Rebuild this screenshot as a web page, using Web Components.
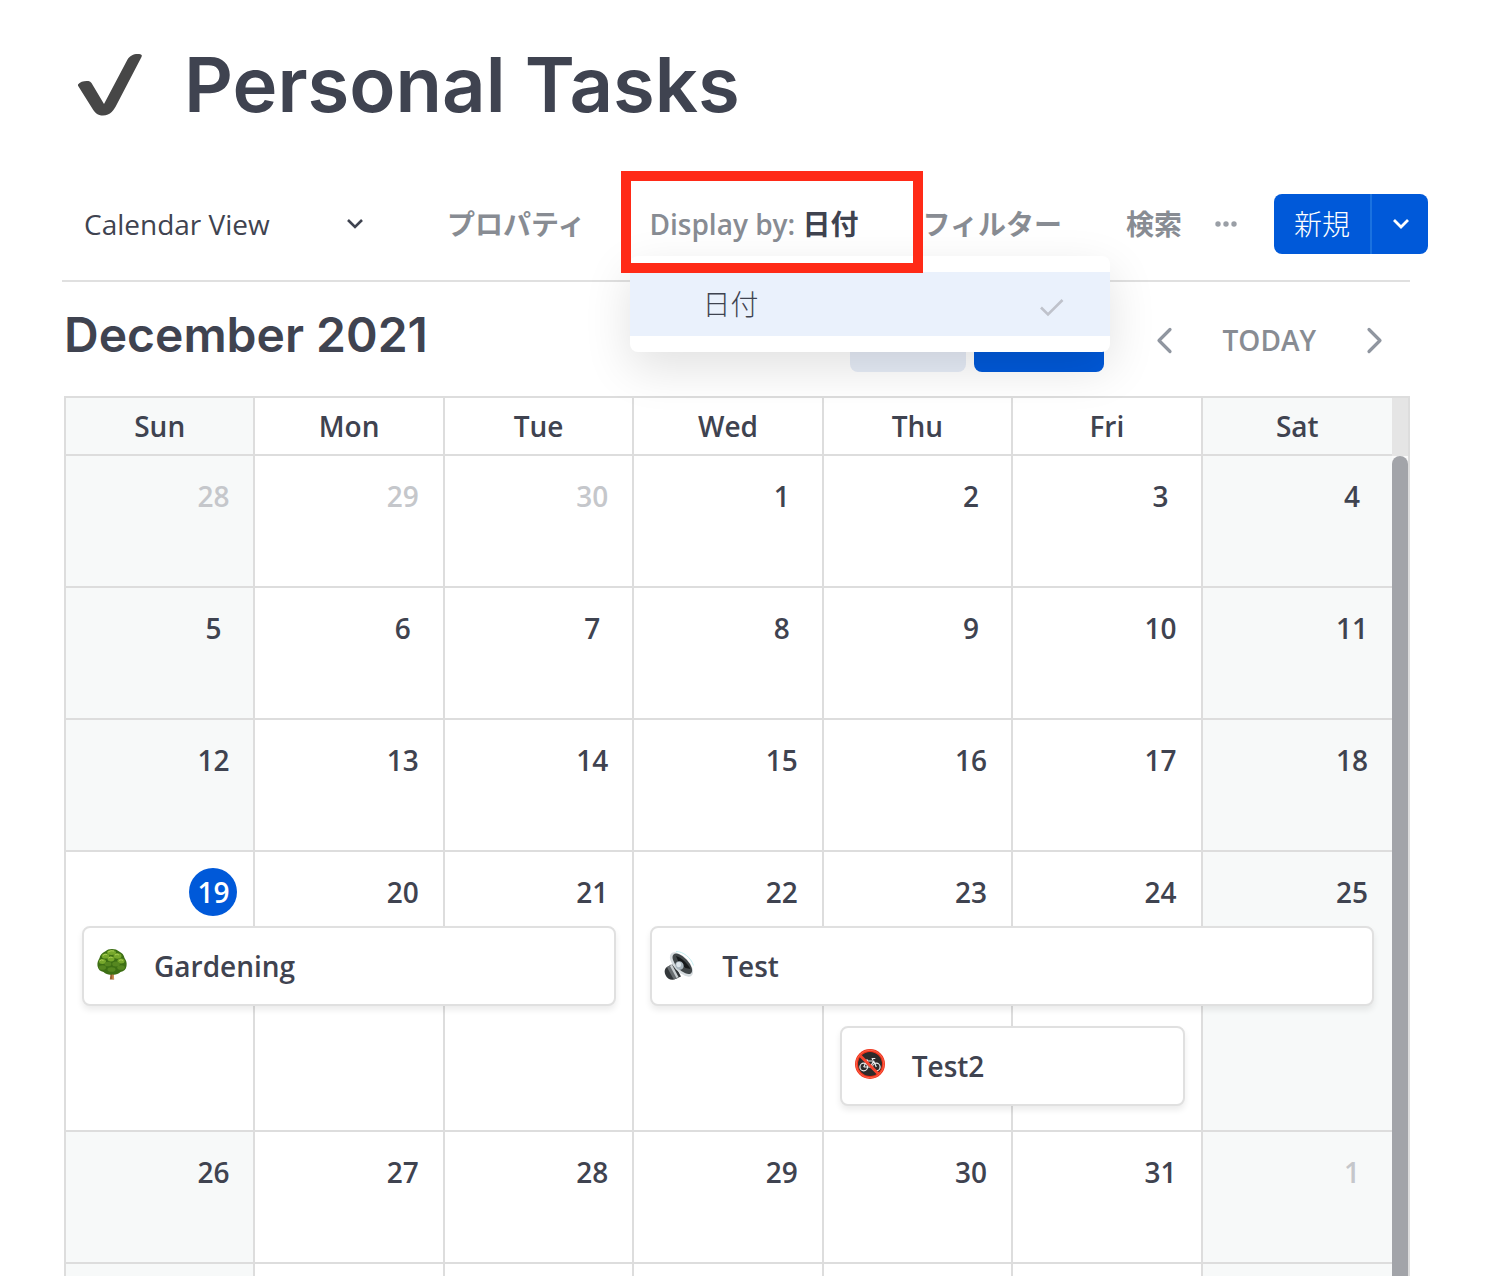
<!DOCTYPE html>
<html lang="ja">
<head>
<meta charset="utf-8">
<meta name="viewport" content="width=device-width, initial-scale=1">
<title>Personal Tasks</title>
<style>
  html { --ink: #3f4350; --muted: #888c93; --line: #dddddd; --blue: #0059d9; --tint: #f7f9f9; }
  body {
    margin: 0; background: #fff; color: var(--ink);
    font: 28px/40px "Open Sans", "Noto Sans CJK JP", sans-serif;
  }
</style>
</head>
<body>
<board-app></board-app>

<script>
const define = (name, html, init) => {
  const template = document.createElement('template');
  template.innerHTML = html;
  customElements.define(name, class extends HTMLElement {
    constructor() {
      super();
      this.attachShadow({ mode: 'open' }).append(template.content.cloneNode(true));
    }
    connectedCallback() { if (init) init(this, this.shadowRoot); }
  });
};

const BUTTON = `button { font: inherit; color: inherit; background: none; border: 0; padding: 0; margin: 0; cursor: pointer; }`;

/* Emoji drawings for cards */
const EMOJI = {
  tree: `<svg viewBox="0 0 32 32" width="32" height="32">
    <path d="M14 21h4l-.4 5 .6 5.5h-4.4l.6-5z" fill="#9a6234"/><path d="M16.500 22h1.300l-.3 5 .4 4h-1.400z" fill="#e0a060"/>
    <path d="M16 1c-3 0-5 .8-7 2.500C6 5 4 7 3.500 10 2 12.500 1 15 1.500 18c.5 3.500 3 5.500 6 6 2.500 2.500 6 3 8.500 2.500 3 .5 6-.2 8.500-2.500 3.500-.5 5.700-3 6-6 .5-3-.2-5.500-2-8-.5-3-2.500-5.200-5.300-6.500C21.200 1.800 19 1 16 1z" fill="#3d6f14"/>
    <g fill="#77a82c"><ellipse cx="15.500" cy="4.500" rx="4.500" ry="2.500"/><ellipse cx="9.500" cy="8" rx="3.800" ry="2.600"/><ellipse cx="21.500" cy="8" rx="4" ry="2.700"/><ellipse cx="15" cy="11" rx="3.500" ry="2.400"/><ellipse cx="6.500" cy="13.500" rx="3.500" ry="2.500"/><ellipse cx="25" cy="13" rx="3.600" ry="2.500"/></g>
    <g fill="#568720"><ellipse cx="12" cy="16" rx="3.400" ry="2.300"/><ellipse cx="20" cy="16" rx="3.800" ry="2.500"/><ellipse cx="6.500" cy="19.500" rx="3.500" ry="2.300"/><ellipse cx="25" cy="19.500" rx="3.800" ry="2.300"/><ellipse cx="15.500" cy="21.500" rx="4" ry="2.300"/></g>
    <g fill="none" stroke="#b5d65d" stroke-width=".8"><path d="M12 4q3-2 6-1M7 7.500q2-2 4-1M19 7q2-2 4 0M12.500 10q2-1.500 4-.5M3.500 13q2-2 4-.5M23 12.500q2-1.500 4 0"/></g></svg>`,
  speaker: `<svg viewBox="0 -3 32 32" width="32" height="32">
    <path d="M3 16c-2.500 1.500-3 5-1.500 8 1.500 3.500 5 5.500 8.500 4.500l7-3-7-13z" fill="#33373a"/>
    <path d="M3 16l4-2.500 7 13.500-4 1.500C7 24 5 20 3 16z" fill="#686d70"/><path d="M6 15l2-1.500 6.500 12.500-2 1z" fill="#c9ced0"/>
    <ellipse cx="17.500" cy="13.500" rx="7.500" ry="15" transform="rotate(-43 17.500 13.500)" fill="#d5dbde"/>
    <ellipse cx="18.300" cy="12.800" rx="6" ry="12.800" transform="rotate(-43 18.300 12.800)" fill="#414749"/>
    <path d="M12 5c5 1 12 8 14.500 13l-5-1-7-6z" fill="#15191b"/><ellipse cx="15.500" cy="14.500" rx="4" ry="4.500" transform="rotate(-38 15.500 14.500)" fill="#a8b5bd"/><ellipse cx="14.700" cy="13.600" rx="2.300" ry="2.700" fill="#dce4e9"/>
    <path d="M12 .5c7 0 15 6 17.500 14" fill="none" stroke="#b5eaed" stroke-width=".8"/></svg>`,
  nobike: `<svg viewBox="0 0 32 32" width="32" height="32">
    <circle cx="16" cy="16" r="15" fill="#ef3119"/><circle cx="16" cy="16" r="13.800" fill="none" stroke="#ff735d" stroke-width=".8"/><circle cx="16" cy="16" r="12" fill="#2d2b2b"/>
    <g fill="none" stroke="#eeeeee" stroke-width="1.200"><circle cx="9.700" cy="19" r="3.800"/><circle cx="22.300" cy="19" r="3.800"/><path d="M9.700 19l3-6h7l2.600 6M12.700 13l3.500 6 3.500-6M16.200 19H9.700M11 12.200h3M18.800 12l-.5-1.500h3"/></g>
    <path d="M6 7.500L24.500 26" stroke="#f8442e" stroke-width="3"/></svg>`
};

define('page-title', `
<style>
  :host { display: flex; align-items: center; gap: 36px; padding: 32px 0 0 12px; height: 104px; }
  svg { padding-top: 4px; }
  h1 { margin: 0; font: 600 76px/104px Inter, sans-serif; }
</style>
<svg width="72" height="72" viewBox="0 0 72 72" aria-hidden="true"><path d="M2 34.500C4 31.500 9 30.500 12.500 31q2 .3 3 2L28 54 51.500 9.500C54 5 60 3 65 4.500q1.500.5.5 2.500L41 54c-3 6-6.500 11.500-14 11.500-5.500 0-7.500-2-11-7.500L2.500 36.500Q1.600 35.500 2 34.500z" fill="#474747"/></svg>
<h1><slot></slot></h1>`);

define('view-picker', `
<style>
  :host { display: flex; align-items: center; position: relative; width: 284px; }
  select { appearance: none; width: 100%; height: 60px; border: 0; padding: 0; margin: 0; background: none; font: inherit; color: inherit; cursor: pointer; }
  svg { position: absolute; right: 4px; pointer-events: none; }
</style>
<select aria-label="View"><option>Calendar View</option></select>
<svg width="18" height="12" viewBox="0 0 18 12"><path d="M2 2l7 7 7-7" fill="none" stroke="#3f4350" stroke-width="2.600"/></svg>`);

define('tool-button', `
<style>
  :host { display: block; color: var(--muted); font-weight: 600; }
  ${BUTTON}
  button { display: flex; align-items: center; height: 60px; white-space: pre; }
</style>
<button type="button"><slot></slot></button>`);

define('display-by', `
<style>
  :host { display: block; position: relative; }
  strong { color: var(--ink); font-weight: 600; }
  .menu {
    position: absolute; z-index: 2; left: -19px; top: 62px; width: 480px; padding: 16px 0;
    border-radius: 8px; background: #fff; box-shadow: 0 16px 48px rgba(0,0,0,.12);
  }
  ${BUTTON}
  .menu button { display: flex; align-items: center; justify-content: space-between; width: 100%; height: 64px; padding: 0 46px 0 72px; background: #eaf1fc; font-weight: 300; text-align: left; }
  .menu svg { margin-top: 8px; }
  .mark { position: absolute; z-index: 3; inset: -23px -64px -19px -28px; border: 10px solid #ff2a17; pointer-events: none; }
</style>
<tool-button>Display by: <strong>日付</strong></tool-button>
<div class="menu" role="menu"><button type="button" role="menuitemradio" aria-checked="true">日付
  <svg width="25" height="20" viewBox="0 0 25 20"><path d="M2 9.500l7 7L23.500 2" fill="none" stroke="#bfc2cb" stroke-width="2.600"/></svg></button></div>
<div class="mark"></div>`);

define('new-button', `
<style>
  :host { display: flex; height: 60px; border-radius: 8px; overflow: hidden; background: var(--blue); color: #fff; font-weight: 300; }
  ${BUTTON}
  button { padding: 0 20px; }
  .more { display: grid; place-items: center; width: 58px; border-left: 2px solid #1a72e0; }
</style>
<button type="button"><slot></slot></button>
<button type="button" class="more" aria-label="More templates"><svg width="18" height="12" viewBox="0 0 18 12"><path d="M2 2l7 7 7-7" fill="none" stroke="#fff" stroke-width="2.800"/></svg></button>`);

define('view-toolbar', `
<style>
  :host { display: flex; justify-content: space-between; align-items: center; padding-left: 20px; margin-right: 66px; height: 60px; }
  .tools { display: flex; align-items: center; gap: 64px; }
  .end { display: flex; align-items: center; gap: 32px; }
  ${BUTTON}
  .dots { display: flex; margin-right: 4px; }
</style>
<view-picker></view-picker>
<div class="tools">
  <tool-button>プロパティ</tool-button>
  <display-by></display-by>
  <tool-button>フィルター</tool-button>
  <div class="end">
    <tool-button>検索</tool-button>
    <button type="button" class="dots" aria-label="More"><svg width="24" height="6" viewBox="0 0 24 6" fill="#9a9fa6"><circle cx="4" cy="3" r="2.700"/><circle cx="12" cy="3" r="2.700"/><circle cx="20" cy="3" r="2.700"/></svg></button>
    <new-button>新規</new-button>
  </div>
</div>`);

define('month-header', `
<style>
  :host { display: flex; justify-content: space-between; align-items: center; height: 64px; }
  h2 { margin: 0; font: 600 48px/56px Inter, sans-serif; padding-bottom: 10px; }
  ${BUTTON}
  .right, .modes, .nav { display: flex; align-items: center; }
  .right { gap: 44px; }
  .modes { gap: 8px; }
  .modes button { height: 64px; width: 116px; border-radius: 8px; background: #e6ecf7; }
  .modes .on { width: 130px; background: var(--blue); }
  .nav { gap: 43px; padding-right: 19px; color: var(--muted); font-weight: 600; }
  .nav svg { display: block; }
</style>
<h2><slot></slot></h2>
<div class="right">
  <div class="modes"><button type="button" aria-label="Week"></button><button type="button" class="on" aria-label="Month"></button></div>
  <div class="nav">
    <button type="button" aria-label="Previous"><svg width="32" height="32" viewBox="0 0 32 32"><path d="M22 5.500L11 16.500l11 11" fill="none" stroke="#9096a0" stroke-width="3.200" stroke-linecap="round" stroke-linejoin="round"/></svg></button>
    <button type="button">TODAY</button>
    <button type="button" aria-label="Next"><svg width="32" height="32" viewBox="0 0 32 32"><path d="M10 5.500l11 11-11 11" fill="none" stroke="#9096a0" stroke-width="3.200" stroke-linecap="round" stroke-linejoin="round"/></svg></button>
  </div>
</div>`);

define('event-card', `
<style>
  :host {
    display: flex; align-items: center; gap: 26px; box-sizing: border-box; position: relative; z-index: 1;
    height: 80px; margin: 0 16px; padding: 0 12px;
    width: calc(var(--span) * (100% + 2px) - 34px);
    border: 2px solid #e0e0e0; border-radius: 8px; background: #fff; box-shadow: 0 4px 6px rgba(0,0,0,.08);
  }
  .icon { display: flex; padding-bottom: 4px; }
</style>
<span class="icon" aria-hidden="true"></span><slot></slot>`, (el, root) => {
  root.querySelector('.icon').innerHTML = EMOJI[el.getAttribute('icon')];
  el.style.setProperty('--span', el.getAttribute('days'));
});

define('month-grid', `
<style>
  :host { display: flex; align-items: flex-start; border: 2px solid var(--line); border-bottom: 0; overflow: hidden; }
  .days { flex: 1; min-width: 0; }
  table { width: 100%; table-layout: fixed; border-collapse: separate; border-spacing: 0; font-weight: 600; }
  th, td { box-sizing: border-box; padding: 0; border: 0 solid var(--line); border-width: 0 2px 2px 0; vertical-align: top; }
  th:last-child, td:last-child { border-right: 0; }
  th:first-child, th:last-child, td:first-child, td:last-child { background: var(--tint); }
  td.today { background: #fff; }
  th { height: 58px; font-weight: 600; vertical-align: middle; }
  td { height: 132px; }
  tr.tall td { height: 280px; }
  .day { display: block; width: 48px; margin: 16px 16px 10px auto; border-radius: 24px; line-height: 48px; text-align: center; }
  .other .day { color: #c5c7cb; }
  .today .day { background: var(--blue); color: #fff; }
  .second { margin-top: 110px; }
  .scroll { display: flex; flex-direction: column; align-self: stretch; width: 16px; background: #fafafa; }
  .scroll::before { content: ""; height: 58px; background: #e5e5e5; }
  .thumb { flex: 1; border-radius: 8px 8px 0 0; background: #a2a4a9; }
</style>
<div class="days"><table><thead><tr></tr></thead><tbody></tbody></table></div>
<div class="scroll"><div class="thumb"></div></div>`, (el, root) => {
  root.querySelector('thead tr').innerHTML =
    ['Sun', 'Mon', 'Tue', 'Wed', 'Thu', 'Fri', 'Sat'].map(d => `<th scope="col">${d}</th>`).join('');
  const events = {
    19: '<event-card icon="tree" days="3">Gardening</event-card>',
    22: '<event-card icon="speaker" days="4">Test</event-card>',
    23: '<event-card class="second" icon="nobike" days="2">Test2</event-card>'
  };
  let rows = '';
  for (let w = 0; w < 5; w++) {
    rows += `<tr${w === 3 ? ' class="tall"' : ''}>`;
    for (let d = 0; d < 7; d++) {
      const date = new Date(2021, 10, 28 + w * 7 + d), n = date.getDate();
      const inMonth = date.getMonth() === 11;
      const cls = !inMonth ? 'other' : n === 19 ? 'today' : '';
      rows += `<td class="${cls}"><span class="day">${n}</span>${inMonth && events[n] || ''}</td>`;
    }
    rows += '</tr>';
  }
  root.querySelector('tbody').innerHTML = rows + '<tr>' + '<td></td>'.repeat(7) + '</tr>';
});

define('board-app', `
<style>
  :host { display: flex; flex-direction: column; height: 100vh; overflow: hidden; }
  page-title, view-toolbar, month-header, month-grid { flex: none; }
  page-title { margin: 0 64px; }
  view-toolbar { margin-left: 64px; margin-top: 58px; }
  hr { flex: none; width: auto; height: 2px; border: 0; margin: 26px 84px 26px 62px; background: #e0e0e0; }
  month-header { margin: 0 84px 24px 64px; }
  month-grid { margin: 0 84px 0 64px; }
</style>
<page-title>Personal Tasks</page-title>
<view-toolbar></view-toolbar>
<hr>
<month-header>December 2021</month-header>
<month-grid></month-grid>`);
</script>
</body>
</html>
